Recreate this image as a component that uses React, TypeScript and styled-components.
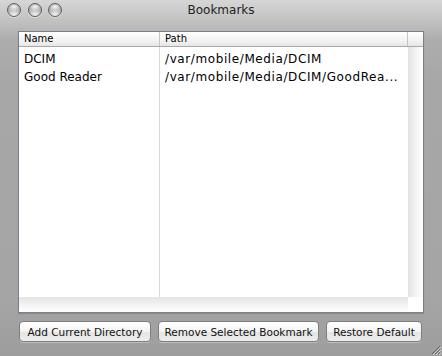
import { FC } from "react";
import styled, { createGlobalStyle } from "styled-components";

const GlobalStyle = createGlobalStyle`
  html, body {
    margin: 0;
    padding: 0;
    background: #a6a6a6;
  }
  * {
    box-sizing: border-box;
  }
`;

const font = `"DejaVu Sans", "Verdana", sans-serif`;

const Window = styled.div`
  position: relative;
  width: 442px;
  height: 356px;
  display: flex;
  flex-direction: column;
  font-family: ${font};
  color: #000;
  background: linear-gradient(
    #d6d6d6 0px,
    #c2c2c2 20px,
    #adadad 40px,
    #a7a7a7 80px,
    #a5a5a5 300px,
    #9d9d9d 356px
  );
  overflow: hidden;
`;

const TitleBar = styled.div`
  height: 19px;
  display: grid;
  grid-template-columns: 1fr auto 1fr;
  align-items: center;
`;

const Lights = styled.div`
  display: flex;
  gap: 6.5px;
  padding-left: 7px;
`;

const Light = styled.span`
  width: 14px;
  height: 14px;
  border-radius: 50%;
  border: 1px solid #5f5f5f;
  background: radial-gradient(
      ellipse 60% 40% at 50% 22%,
      rgba(255, 255, 255, 0.95) 0,
      rgba(255, 255, 255, 0.3) 60%,
      transparent 100%
    ),
    radial-gradient(circle at 50% 90%, #f4f4f4 0, #bcbcbc 45%, #858585 100%);
  box-shadow: 0 1px 0 rgba(255, 255, 255, 0.4);
`;

const Title = styled.div`
  font-size: 12px;
  color: #222;
  padding-top: 1px;
`;

const Panel = styled.div`
  margin: 12px 18px 0 18px;
  height: 282px;
  display: flex;
  flex-direction: column;
  background: #fff;
  border: 1px solid #76818c;
  box-shadow: 0 1px 1px rgba(0, 0, 0, 0.15);
`;

const Columns = styled.div`
  display: grid;
  grid-template-columns: 141px 248px 15px;
`;

const Header = styled(Columns)`
  height: 15px;
  background: linear-gradient(#ffffff, #f3f3f3 60%, #e6e6e6);
  border-bottom: 1px solid #a9a9a9;
`;

const HeadCell = styled.div<{ $last?: boolean }>`
  font-size: 10px;
  line-height: 14px;
  padding-left: 5px;
  border-right: ${({ $last }) => ($last ? "none" : "1px solid #c4c4c4")};
  white-space: nowrap;
`;

const Body = styled(Columns)`
  flex: 1;
`;

const Column = styled.div<{ $divider?: boolean }>`
  padding-top: 3px;
  border-right: ${({ $divider }) => ($divider ? "1px solid #d9d9d9" : "none")};
  overflow: hidden;
`;

const Cell = styled.div<{ $spaced?: boolean }>`
  height: 18px;
  line-height: 18px;
  font-size: 12px;
  padding-left: 5px;
  white-space: nowrap;
  letter-spacing: ${({ $spaced }) => ($spaced ? "0.6px" : "0")};
`;

const ScrollTrack = styled.div`
  background: linear-gradient(to right, #e2e2e2, #f6f6f6 60%, #ffffff);
`;

const BottomStrip = styled.div`
  height: 15px;
  display: grid;
  grid-template-columns: 389px 15px;
`;

const HScroll = styled.div`
  background: linear-gradient(#e4e4e4, #f5f5f5 60%, #ffffff);
`;

const Corner = styled.div`
  background: #fff;
`;

const ButtonRow = styled.div`
  display: flex;
  gap: 7px;
  margin: 8px 0 0 19px;
`;

const Button = styled.button<{ $width: number }>`
  width: ${({ $width }) => $width}px;
  height: 21px;
  padding: 0;
  font-family: ${font};
  font-size: 10.5px;
  color: #111;
  border: 1px solid #7e7e7e;
  border-radius: 4px;
  background: linear-gradient(#ffffff, #f4f4f4 50%, #e4e4e4 51%, #ededed);
  box-shadow: 0 1px 0 rgba(255, 255, 255, 0.3);
  white-space: nowrap;
`;

const Grip = styled.svg`
  position: absolute;
  right: 1px;
  bottom: 1px;
`;

const rows = [
  { name: "DCIM", path: "/var/mobile/Media/DCIM" },
  { name: "Good Reader", path: "/var/mobile/Media/DCIM/GoodRea..." },
];

const App: FC = () => {
  return (
    <Window>
      <GlobalStyle />
      <TitleBar>
        <Lights>
          <Light />
          <Light />
          <Light />
        </Lights>
        <Title>Bookmarks</Title>
        <div />
      </TitleBar>
      <Panel>
        <Header>
          <HeadCell>Name</HeadCell>
          <HeadCell>Path</HeadCell>
          <HeadCell $last />
        </Header>
        <Body>
          <Column $divider>
            {rows.map((r) => (
              <Cell key={r.name}>{r.name}</Cell>
            ))}
          </Column>
          <Column>
            {rows.map((r) => (
              <Cell key={r.path} $spaced>
                {r.path}
              </Cell>
            ))}
          </Column>
          <ScrollTrack />
        </Body>
        <BottomStrip>
          <HScroll />
          <Corner />
        </BottomStrip>
      </Panel>
      <ButtonRow>
        <Button $width={132}>Add Current Directory</Button>
        <Button $width={161}>Remove Selected Bookmark</Button>
        <Button $width={96}>Restore Default</Button>
      </ButtonRow>
      <Grip width="11" height="11" viewBox="0 0 11 11">
        <path d="M10 2 L2 10 M10 5 L5 10 M10 8 L8 10" stroke="#666" strokeWidth="1" />
        <path d="M11 3 L3 11 M11 6 L6 11 M11 9 L9 11" stroke="#d0d0d0" strokeWidth="1" />
      </Grip>
    </Window>
  );
};

export default App;
